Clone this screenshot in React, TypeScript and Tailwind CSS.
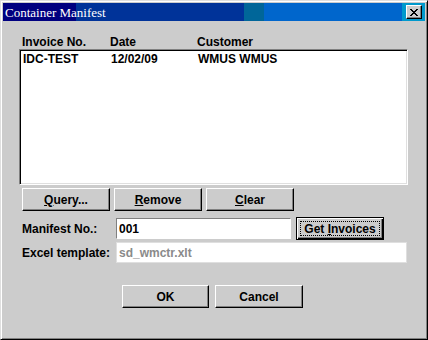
import React from 'react'

const raised =
  'border border-t-white border-l-white border-r-black border-b-black bg-[#cccccc] shadow-[inset_-1px_-1px_#808080]'

const field = 'border border-t-[#808080] border-l-[#808080] border-r-white border-b-white bg-white'

const invoices = [{ no: 'IDC-TEST', date: '12/02/09', customer: 'WMUS WMUS' }]

function Btn({ hot, rest, w }: { hot: string; rest: string; w: string }) {
  return (
    <button className={`${raised} ${w} h-[23px] flex items-center justify-center text-[12px] font-bold text-black`}>
      <span>
        <span className="underline underline-offset-1">{hot}</span>
        {rest}
      </span>
    </button>
  )
}

function CloseIcon() {
  return (
    <svg width="8" height="7" viewBox="0 0 8 7" shapeRendering="crispEdges">
      <path d="M0 0h2v1H0zM6 0h2v1H6zM1 1h2v1H1zM5 1h2v1H5zM2 2h4v1H2zM3 3h2v1H3zM2 4h4v1H2zM1 5h2v1H1zM5 5h2v1H5zM0 6h2v1H0zM6 6h2v1H6z" fill="#000" />
    </svg>
  )
}

export default function App() {
  return (
    <div className="w-[428px] h-[340px] bg-[#cccccc] border border-t-[#dfdfdf] border-l-[#dfdfdf] border-r-black border-b-black shadow-[inset_1px_1px_white,inset_-1px_-1px_#808080] p-[2px] flex flex-col font-['Liberation_Sans',Arial,sans-serif] text-black">
      <div className="h-[18px] flex items-center justify-between bg-[linear-gradient(90deg,#000080_0px,#000080_73px,#003399_73px,#003399_241px,#006699_241px,#006699_261px,#0066cc_261px,#0066cc_399px,#0099cc_399px)]">
        <span className="pl-[2px] pt-[1px] text-white text-[13px] leading-none font-['Liberation_Serif','Times_New_Roman',serif]">
          Container Manifest
        </span>
        <button className={`${raised} w-[16px] h-[14px] mr-[3px] flex items-center justify-center`}>
          <CloseIcon />
        </button>
      </div>

      <div className="flex flex-col pl-[16px] text-[12px] font-bold leading-[14px]">
        <div className="mt-[14px] grid grid-cols-[88px_87px_1fr] pl-[3px]">
          <span>Invoice No.</span>
          <span>Date</span>
          <span>Customer</span>
        </div>

        <div className="w-[389px] h-[136px] border border-t-[#808080] border-l-[#808080] border-r-white border-b-white bg-white shadow-[inset_1px_1px_black,inset_-1px_-1px_#dfdfdf] p-[2px]">
          {invoices.map((r) => (
            <div key={r.no} className="grid grid-cols-[88px_87px_1fr] pl-[1px]">
              <span>{r.no}</span>
              <span>{r.date}</span>
              <span>{r.customer}</span>
            </div>
          ))}
        </div>

        <div className="mt-[3px] ml-[3px] flex gap-[4px]">
          <Btn hot="Q" rest="uery..." w="w-[88px]" />
          <Btn hot="R" rest="emove" w="w-[88px]" />
          <Btn hot="C" rest="lear" w="w-[88px]" />
        </div>

        <div className="mt-[6px] flex items-center h-[23px]">
          <span className="w-[97px] pl-[3px]">Manifest No.:</span>
          <div className={`${field} w-[175px] h-[21px] flex items-center pl-[2px]`}>001</div>
          <button className="ml-[5px] w-[88px] h-[23px] border border-black bg-[#cccccc] shadow-[inset_1px_1px_white,inset_-1px_-1px_black,inset_-2px_-2px_#808080] p-[3px] flex">
            <span className="flex-1 border border-dotted border-black flex items-center justify-center text-[12px] font-bold">
              <span>
                Get <span className="underline underline-offset-1">I</span>nvoices
              </span>
            </span>
          </button>
        </div>

        <div className="mt-[2px] flex items-center h-[21px]">
          <span className="w-[97px] pl-[3px]">Excel template:</span>
          <div className="border border-[#dfdfdf] bg-white w-[291px] h-[21px] flex items-center pl-[2px] text-[#8a8a8a]">
            sd_wmctr.xlt
          </div>
        </div>

        <div className="mt-[22px] ml-[103px] flex gap-[6px]">
          <button className={`${raised} w-[87px] h-[23px] text-[12px] font-bold`}>OK</button>
          <button className={`${raised} w-[88px] h-[23px] text-[12px] font-bold`}>Cancel</button>
        </div>
      </div>
    </div>
  )
}
